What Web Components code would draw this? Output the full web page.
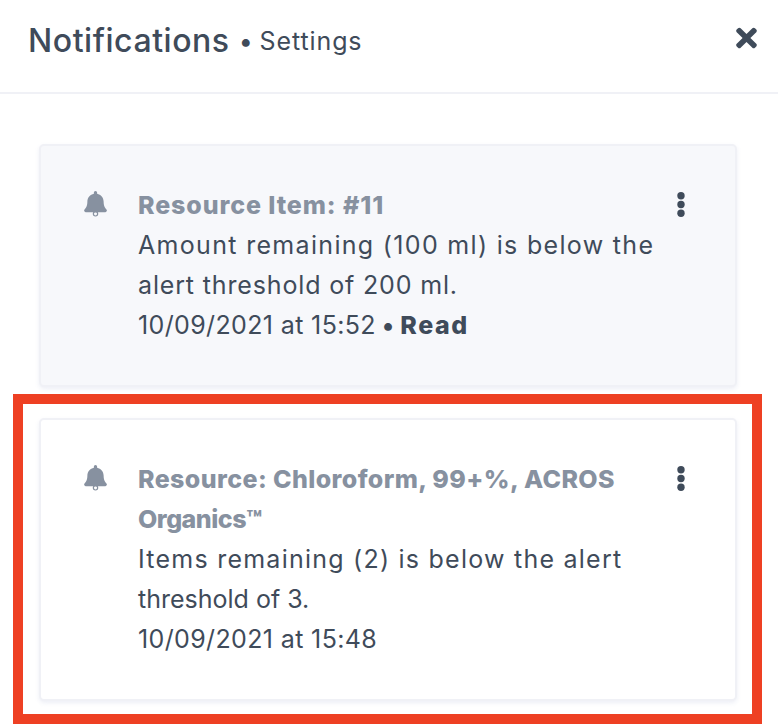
<!DOCTYPE html>
<html>
<head>
<meta charset="utf-8">
<style>
  html, body { margin: 0; padding: 0; background: #fff; }
  body { font-family: "Inter", "Liberation Sans", sans-serif; color: #3f4b5a; }
  /* each line is spaced on its own so it ends where the wider reference face ends */
  notif-card span { display: block; white-space: nowrap; }
  notif-card i { font-style: normal; word-spacing: -2.5px; }
</style>
</head>
<body>
<notif-panel title-text="Notifications" sub-text="Settings">
  <notif-card read>
    <span slot="title" style="letter-spacing: 0.9px">Resource Item: #11</span>
    <span style="letter-spacing: 1.32px">Amount remaining (100 ml) is below the</span>
    <span style="letter-spacing: 0.85px">alert threshold of 200 ml.</span>
    <span slot="date" style="letter-spacing: 0.37px">10/09/2021 at 15:52<i> • </i><b style="font-weight: 800; letter-spacing: 1.6px">Read</b></span>
  </notif-card>
  <notif-card highlight>
    <span slot="title" style="letter-spacing: 0.4px">Resource: Chloroform, 99+%, ACROS</span>
    <span slot="title" style="letter-spacing: -0.5px">Organics™</span>
    <span style="letter-spacing: 1.24px">Items remaining (2) is below the alert</span>
    <span>threshold of 3.</span>
    <span slot="date" style="letter-spacing: 0.37px">10/09/2021 at 15:48</span>
  </notif-card>
</notif-panel>

<script>
// Panel with header and list of cards
const panelTemplate = document.createElement("template");
panelTemplate.innerHTML = `
  <style>
    :host {
      display: block;
      width: 778px;
      height: 728px;
      overflow: hidden;
      font-family: "Inter", "Liberation Sans", sans-serif;
    }

    header {
      display: flex;
      align-items: center;
      justify-content: space-between;
      height: 94px;
      box-sizing: border-box;
      padding: 0 21px 12px 28px;
      border-bottom: 2px solid #f0f1f6;
    }

    .title {
      font-size: 32px;
      font-weight: 500;
      letter-spacing: 0.55px;
      color: #3f4b5a;
    }

    .sub {
      font-size: 25px;
      letter-spacing: 0.9px;
      word-spacing: -2px;
      color: #3f4b5a;
      margin-left: 9px;
      vertical-align: 2px;
    }

    svg {
      display: block;
      width: 21px;
      height: 30px;
      margin-top: -4px;
      fill: #3f4b5a;
    }

    .list {
      display: flex;
      flex-direction: column;
      gap: 31px;
      padding: 50px 41px 0 39px;
    }
  </style>

  <header>
    <div><span class="title" id="title"></span><span class="sub" id="sub"></span></div>
    <svg viewBox="0 0 352 512"><path d="M242.72 256l100.07-100.07c12.28-12.28 12.28-32.19 0-44.48l-22.24-22.24c-12.28-12.28-32.19-12.28-44.48 0L176 189.28 75.93 89.21c-12.28-12.28-32.19-12.28-44.48 0L9.21 111.45c-12.28 12.28-12.28 32.19 0 44.48L109.28 256 9.21 356.07c-12.28 12.28-12.28 32.19 0 44.48l22.24 22.24c12.28 12.28 32.2 12.28 44.48 0L176 322.72l100.07 100.07c12.28 12.28 32.2 12.28 44.48 0l22.24-22.24c12.28-12.28 12.28-32.19 0-44.48L242.72 256z"/></svg>
  </header>
  <div class="list"><slot></slot></div>
`;

class NotifPanel extends HTMLElement {
  constructor() {
    super();
    this.attachShadow({ mode: "open" });
    this.shadowRoot.appendChild(panelTemplate.content.cloneNode(true));
    this.shadowRoot.getElementById("title").textContent = this.getAttribute("title-text");
    this.shadowRoot.getElementById("sub").textContent = "• " + this.getAttribute("sub-text");
  }
}

customElements.define("notif-panel", NotifPanel);

// One notification
const cardTemplate = document.createElement("template");
cardTemplate.innerHTML = `
  <style>
    :host {
      display: block;
      position: relative;
      box-sizing: border-box;
      border: 2px solid #f0f1f6;
      border-radius: 5px;
      box-shadow: 0 2px 4px rgba(225, 228, 240, 0.6);
      background: #fff;
      font-size: 25px;
      line-height: 40px;
      color: #3f4b5a;
    }

    :host([read]) {
      background: #f7f8fb;
    }

    .inner {
      display: grid;
      grid-template-columns: 26px minmax(0, 1fr) 14px;
      column-gap: 29px;
      padding: 39px 47px 40px 42px;
    }

    .bell {
      display: block;
      width: 23px;
      height: 26px;
      margin: 6px 0 0 1px;
      fill: #8791a0;
      overflow: visible;
    }

    .bell circle {
      fill: none;
      stroke: #8791a0;
      stroke-width: 24;
    }

    .dots {
      display: block;
      width: 8px;
      height: 25px;
      margin: 7px 0 0 2.5px;
      fill: #3f4b5a;
    }

    .title {
      font-weight: 800;
      color: #8791a0;
    }

    /* red annotation box drawn over the card */
    .mark {
      display: none;
      position: absolute;
      left: -28px;
      right: -27px;
      top: -26px;
      bottom: -25px;
      border: 10px solid #ee4023;
      pointer-events: none;
    }

    :host([highlight]) .mark {
      display: block;
    }
  </style>

  <div class="inner">
    <svg class="bell" viewBox="0 0 448 512"><circle cx="224" cy="450" r="42"/><path d="M439.39 362.29c-19.32-20.76-55.47-51.99-55.47-154.29 0-77.7-54.48-139.9-127.94-155.16V32c0-17.67-14.32-32-31.98-32s-31.98 14.33-31.98 32v20.84C118.56 68.1 64.08 130.3 64.08 208c0 102.3-36.15 133.53-55.47 154.29-6 6.45-8.66 14.16-8.61 21.71.11 16.4 12.98 32 32.1 32h383.8c19.12 0 32-15.6 32.1-32 .05-7.55-2.61-15.27-8.61-21.71z"/></svg>
    <div>
      <div class="title"><slot name="title"></slot></div>
      <div><slot></slot></div>
      <div><slot name="date"></slot></div>
    </div>
    <svg class="dots" viewBox="0 0 8 25"><circle cx="4" cy="3.7" r="3.7"/><circle cx="4" cy="12.5" r="3.7"/><circle cx="4" cy="21.3" r="3.7"/></svg>
  </div>
  <div class="mark"></div>
`;

class NotifCard extends HTMLElement {
  constructor() {
    super();
    this.attachShadow({ mode: "open" });
    this.shadowRoot.appendChild(cardTemplate.content.cloneNode(true));
  }
}

customElements.define("notif-card", NotifCard);
</script>
</body>
</html>
